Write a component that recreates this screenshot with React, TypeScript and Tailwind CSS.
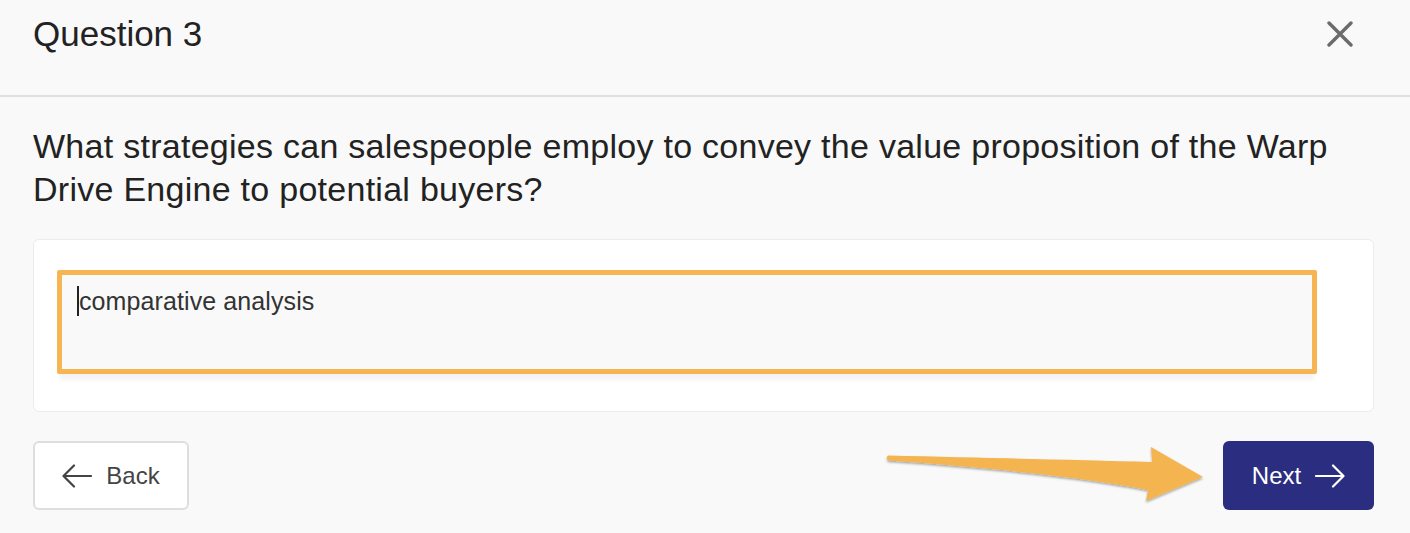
/* eslint-disable */
import React from "react"

function ArrowLeftIcon({ className }: { className?: string }) {
  return (
    <svg viewBox="0 0 30 24" className={className} fill="none" stroke="currentColor" strokeWidth="2.2" strokeLinecap="round" strokeLinejoin="round">
      <path d="M29 12H2" />
      <path d="M12 1.5 1.5 12 12 22.5" />
    </svg>
  )
}

function ArrowRightIcon({ className }: { className?: string }) {
  return (
    <svg viewBox="0 0 30 24" className={className} fill="none" stroke="currentColor" strokeWidth="2.2" strokeLinecap="round" strokeLinejoin="round">
      <path d="M1 12h27" />
      <path d="M18 1.5 28.5 12 18 22.5" />
    </svg>
  )
}

function CloseIcon({ className }: { className?: string }) {
  return (
    <svg viewBox="0 0 26 26" className={className} fill="none" stroke="currentColor" strokeWidth="3.4" strokeLinecap="round">
      <path d="M2 2l22 22M24 2 2 24" />
    </svg>
  )
}

// annotation arrow drawn on top of the page
function Pointer() {
  return (
    <svg className="pointer-events-none absolute left-[880px] top-[440px]" width="330" height="70" viewBox="0 0 330 70">
      <defs>
        <filter id="sh" x="-10%" y="-30%" width="120%" height="160%">
          <feDropShadow dx="0" dy="1.5" stdDeviation="1.2" floodColor="#000" floodOpacity="0.35" />
        </filter>
      </defs>
      <path
        d="M8 15.5 Q5.5 18 8 20.5 C120 28 220 40 268 50 L266 61 L323 37 L271 7 L272 22 C200 20 110 18 8 15.5 Z"
        fill="#f4b44f"
        filter="url(#sh)"
      />
    </svg>
  )
}

export default function App() {
  return (
    <div className="relative h-[533px] w-[1410px] overflow-hidden bg-[#f9f9f9] font-['Liberation_Sans',Arial,sans-serif] text-[#222]">
      <header className="flex h-[97px] items-start justify-between border-b-2 border-[#e0e0e0] pl-[33px] pr-[57px] pt-[14px]">
        <h1 className="text-[35px] leading-[40px] text-[#222]">Question 3</h1>
        <button className="mt-[7px] text-[#6b6b6b]">
          <CloseIcon className="h-[26px] w-[26px]" />
        </button>
      </header>

      <main className="w-[1374px] pl-[33px] pt-[28px]">
        <h2 className="w-[1330px] text-[34px] leading-[43px] tracking-[0.27px] text-[#222]">
          What strategies can salespeople employ to convey the value proposition of the Warp Drive Engine to potential buyers?
        </h2>

        <div className="mt-[28px] h-[173px] w-[1341px] rounded-[6px] border border-[#ececec] bg-white pl-[23px] pt-[30px]">
          <div className="flex h-[104px] w-[1260px] items-start rounded-[2px] border-[5px] border-[#f5b552] bg-[#f9f9f9] pl-[15px] pr-[15px] pt-[11px] shadow-[0_9px_4px_-3px_rgba(0,0,0,0.05)]">
            <span className="border-l-2 border-[#222] text-[25px] leading-[30px] tracking-[0.1px] text-[#333]">comparative analysis</span>
          </div>
        </div>

        <div className="mt-[29px] flex w-[1341px] items-center justify-between">
          <button className="flex h-[69px] w-[156px] items-center justify-center gap-[14px] rounded-[6px] border-2 border-[#dedede] bg-white text-[24px] text-[#444]">
            <ArrowLeftIcon className="h-[24px] w-[30px]" />
            Back
          </button>
          <button className="flex h-[69px] w-[151px] items-center justify-center gap-[14px] rounded-[6px] bg-[#2b2d80] text-[24px] text-white">
            Next
            <ArrowRightIcon className="h-[24px] w-[30px]" />
          </button>
        </div>
      </main>

      <Pointer />
    </div>
  )
}
